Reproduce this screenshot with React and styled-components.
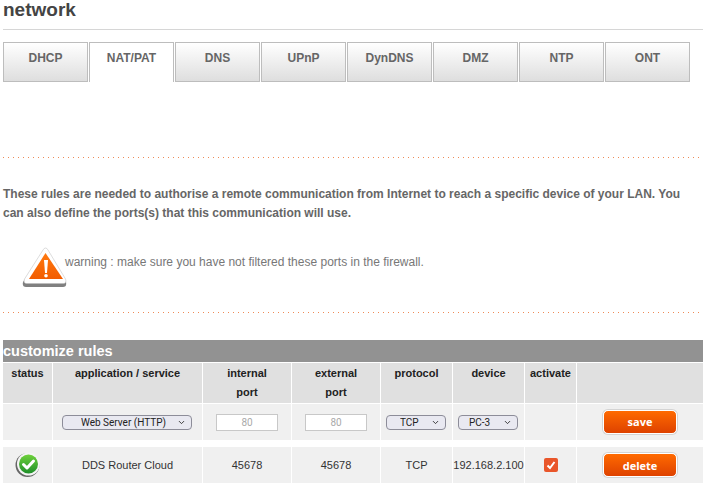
import React from "react";
import styled, { createGlobalStyle } from "styled-components";
import { ChevronDown } from "lucide-react";

const GlobalStyle = createGlobalStyle`
  html, body {
    margin: 0;
    padding: 0;
    background: #fff;
    overflow: hidden;
  }
  body {
    font-family: "Liberation Sans", Arial, sans-serif;
    color: #666;
  }
`;

const Page = styled.div`
  width: 708px;
  height: 490px;
  padding: 0 5px 0 3px;
  box-sizing: border-box;
  overflow: hidden;
`;

const Title = styled.h1`
  margin: 0;
  height: 29px;
  font-size: 19px;
  line-height: 19px;
  font-weight: bold;
  color: #444;
  border-bottom: 1px solid #d6d6d6;
  box-sizing: content-box;
`;

const Tabs = styled.div`
  display: flex;
  gap: 1px;
  margin-top: 12px;
`;

const Tab = styled.div`
  width: 85px;
  height: 40px;
  box-sizing: border-box;
  border: 1px solid #bdbdbd;
  border-bottom: ${(p) => (p.$active ? "none" : "1px solid #bdbdbd")};
  background: ${(p) => (p.$active ? "#fff" : "linear-gradient(#fff, #dedede)")};
  text-align: center;
  font-size: 12px;
  font-weight: bold;
  line-height: 30px;
  color: #666;
`;

const Dots = styled.div`
  width: 696px;
  height: 1px;
  background: repeating-linear-gradient(to right, #ee8a55 0, #ee8a55 1px, transparent 1px, transparent 5px);
  margin-top: ${(p) => p.$top}px;
`;

const Intro = styled.p`
  margin: 27px 0 0;
  width: 690px;
  font-size: 12px;
  line-height: 19px;
  font-weight: bold;
  color: #666;
`;

const Warning = styled.div`
  display: flex;
  align-items: flex-start;
  margin: 25px 0 0 20px;
  height: 64px;
  font-size: 12px;
  color: #777;
`;

const WarningText = styled.span`
  line-height: 14px;
  margin-top: 7px;
`;

const RulesTitle = styled.div`
  margin-top: 27px;
  height: 22px;
  width: 700px;
  background: #929292;
  color: #fff;
  font-size: 14.5px;
  font-weight: bold;
  line-height: 22px;
`;

const Row = styled.div`
  display: grid;
  grid-template-columns: 49px 149px 88px 88px 71px 71px 51px 126px;
  column-gap: 1px;
  width: 700px;
  margin-top: ${(p) => p.$top || 1}px;
`;

const Cell = styled.div`
  height: 36px;
  background: #f0f0f0;
  display: flex;
  align-items: center;
  justify-content: center;
  font-size: 11px;
  color: #333;
  white-space: nowrap;
`;

const HeadCell = styled.div`
  height: 39px;
  padding-top: 1px;
  background: #e0e0e0;
  text-align: center;
  font-size: 11px;
  font-weight: bold;
  line-height: 19px;
  color: #222;
  white-space: nowrap;
`;

const SelectWrap = styled.div`
  position: relative;
  width: ${(p) => p.$w}px;
  height: 15px;
  margin-right: 1px;
  svg {
    position: absolute;
    right: 6px;
    top: 3px;
    color: #333;
    pointer-events: none;
  }
`;

const Select = styled.select`
  appearance: none;
  display: block;
  width: 100%;
  height: 15px;
  box-sizing: border-box;
  font-family: Roboto, sans-serif;
  font-size: 10px;
  line-height: 13px;
  padding: 0 0 0 ${(p) => p.$pad}px;
  color: #222;
  background: #e9e9f1;
  border: 1px solid #8d8d99;
  border-radius: 4px;
`;

const PortInput = styled.input`
  width: 62px;
  height: 17px;
  box-sizing: border-box;
  border: 1px solid #c8c8c8;
  background: #fff;
  text-align: center;
  font-family: Roboto, sans-serif;
  font-size: 10px;
  padding: 0;
  &::placeholder {
    color: #aaa;
  }
`;

const ActionButton = styled.button`
  width: 74px;
  height: 24px;
  margin-top: ${(p) => p.$up || 0}px;
  box-sizing: border-box;
  border: 1px solid #fff;
  border-radius: 5px;
  box-shadow: 0 0 0 1px #d4d4d4;
  background: linear-gradient(#ff6a00, #de4200);
  color: #fff;
  font-family: "Open Sans", sans-serif;
  font-weight: bold;
  font-size: 11px;
  padding: 0;
`;

const CheckBox = styled.span`
  width: 14px;
  height: 14px;
  border-radius: 2px;
  background: #e9562a;
  display: flex;
  align-items: center;
  justify-content: center;
`;

const WarnIcon = () => (
  <svg width="42" height="42" viewBox="0 0 42 42" style={{ flex: "none", overflow: "visible" }}>
    <defs>
      <linearGradient id="wg" x1="0" y1="0" x2="0" y2="1">
        <stop offset="0" stopColor="#ff7a10" />
        <stop offset="1" stopColor="#f25c00" />
      </linearGradient>
    </defs>
    <path d="M21 4 L43 34 Q44 39 40 39 H3 Q-1 39 0 34 Z" fill="#4a4a4a" opacity="0.7" />
    <path d="M22.500 0 Q24 0 25 2 L42.500 31 Q44 35.500 40.500 35.500 H3.500 Q0 35.500 1.500 31 L20 2 Q21 0 22.500 0 Z" fill="#fff" stroke="#bbb" strokeWidth="0.5" />
    <path d="M22.500 5 L40 31 H6 Z" fill="url(#wg)" />
    <path d="M21 12 H25 L24 25 H22 Z" fill="#fff" />
    <circle cx="23" cy="27.800" r="1.800" fill="#fff" />
  </svg>
);

const StatusIcon = () => (
  <svg width="26" height="26" viewBox="0 0 26 26">
    <defs>
      <linearGradient id="sg" x1="0" y1="0" x2="0" y2="1">
        <stop offset="0" stopColor="#6fd13c" />
        <stop offset="1" stopColor="#1f8f2a" />
      </linearGradient>
    </defs>
    <circle cx="12.500" cy="13" r="12" fill="#666" />
    <circle cx="13.500" cy="12" r="11.500" fill="#f4f4f4" />
    <circle cx="13.500" cy="12" r="9.500" fill="url(#sg)" />
    <path d="M8.500 12.500 L12 16 L18.500 9" fill="none" stroke="#fff" strokeWidth="3" strokeLinecap="round" strokeLinejoin="round" />
  </svg>
);

const tabs = ["DHCP", "NAT/PAT", "DNS", "UPnP", "DynDNS", "DMZ", "NTP", "ONT"];

const Picker = ({ w, pad, value }) => (
  <SelectWrap $w={w}>
    <Select $pad={pad} defaultValue={value}>
      <option value={value}>{value}</option>
    </Select>
    <ChevronDown size={9} strokeWidth={2.5} />
  </SelectWrap>
);

const App = () => {
  return (
    <Page>
      <GlobalStyle />
      <Title>network</Title>
      <Tabs>
        {tabs.map((t) => (
          <Tab key={t} $active={t === "NAT/PAT"}>
            {t}
          </Tab>
        ))}
      </Tabs>
      <Dots $top={75} />
      <Intro>
        These rules are needed to authorise a remote communication from Internet to reach a specific device of your LAN.
        You can also define the ports(s) that this communication will use.
      </Intro>
      <Warning>
        <WarnIcon />
        <WarningText>warning : make sure you have not filtered these ports in the firewall.</WarningText>
      </Warning>
      <Dots $top={0} />
      <RulesTitle>customize rules</RulesTitle>
      <Row>
        <HeadCell>status</HeadCell>
        <HeadCell>application / service</HeadCell>
        <HeadCell>
          internal
          <br />
          port
        </HeadCell>
        <HeadCell>
          external
          <br />
          port
        </HeadCell>
        <HeadCell>protocol</HeadCell>
        <HeadCell>device</HeadCell>
        <HeadCell>activate</HeadCell>
        <HeadCell />
      </Row>
      <Row>
        <Cell />
        <Cell>
          <Picker w={130} pad={18} value="Web Server (HTTP)" />
        </Cell>
        <Cell>
          <PortInput placeholder="80" />
        </Cell>
        <Cell>
          <PortInput placeholder="80" />
        </Cell>
        <Cell>
          <Picker w={60} pad={13} value="TCP" />
        </Cell>
        <Cell>
          <Picker w={60} pad={10} value="PC-3" />
        </Cell>
        <Cell />
        <Cell>
          <ActionButton $up={-1}>save</ActionButton>
        </Cell>
      </Row>
      <Row $top={7}>
        <Cell>
          <StatusIcon />
        </Cell>
        <Cell>DDS Router Cloud</Cell>
        <Cell>45678</Cell>
        <Cell>45678</Cell>
        <Cell>TCP</Cell>
        <Cell>192.168.2.100</Cell>
        <Cell>
          <CheckBox>
            <svg width="10" height="10" viewBox="0 0 10 10">
              <path d="M1.500 5.500 L4 8 L8.500 2" fill="none" stroke="#fff" strokeWidth="2" />
            </svg>
          </CheckBox>
        </Cell>
        <Cell>
          <ActionButton>delete</ActionButton>
        </Cell>
      </Row>
    </Page>
  );
};

export default App;
